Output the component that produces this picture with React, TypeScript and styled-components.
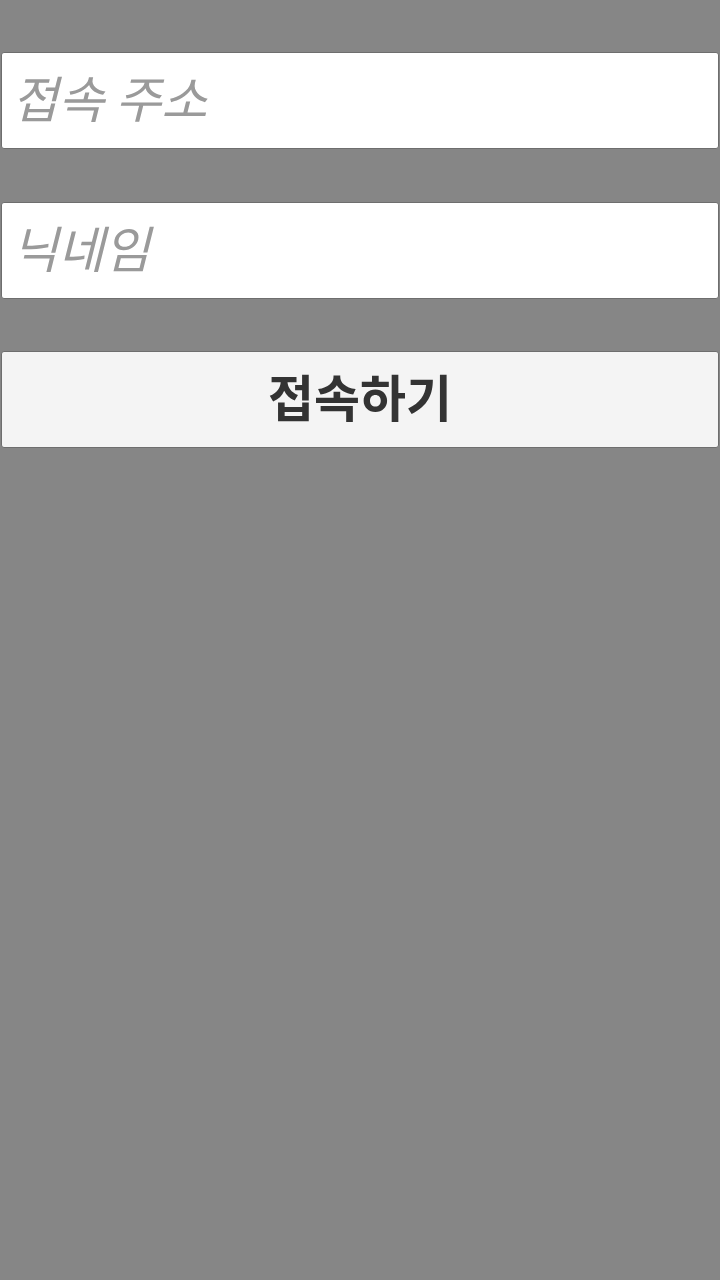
import React from "react";
import styled, { createGlobalStyle } from "styled-components";

const GlobalStyle = createGlobalStyle`
  html, body {
    margin: 0;
    padding: 0;
    background: #868686;
    font-family: "Noto Sans CJK KR", "Noto Sans", sans-serif;
  }
  * { box-sizing: border-box; }
`;

const Form = styled.form`
  display: flex;
  flex-direction: column;
  gap: 53px;
  padding: 52px 1px 0 1px;
  min-height: 1280px;
`;

const Field = styled.input`
  display: block;
  width: 100%;
  height: 97px;
  margin: 0;
  padding: 0 10px 9px 10px;
  border: 1px solid #6e6e6e;
  border-radius: 3px;
  background: #ffffff;
  font-family: "Noto Sans CJK KR", "Noto Sans", sans-serif;
  font-size: 50px;
  color: #333;
  outline: none;

  &::placeholder {
    color: #9a9a9a;
    font-style: italic;
  }
`;

const Submit = styled.button`
  display: block;
  width: 100%;
  height: 97px;
  margin: -1px 0 0 0;
  padding: 0 0 10px 0;
  border: 1px solid #6e6e6e;
  border-radius: 3px;
  background: #f4f4f4;
  font-family: "Noto Sans CJK KR", "Noto Sans", sans-serif;
  font-size: 50px;
  font-weight: 700;
  color: #333333;
  cursor: pointer;
`;

export default function App() {
  return (
    <>
      <GlobalStyle />
      <Form onSubmit={(e) => e.preventDefault()}>
        <Field type="text" placeholder="접속 주소" />
        <Field type="text" placeholder="닉네임" />
        <Submit type="submit">접속하기</Submit>
      </Form>
    </>
  );
}
